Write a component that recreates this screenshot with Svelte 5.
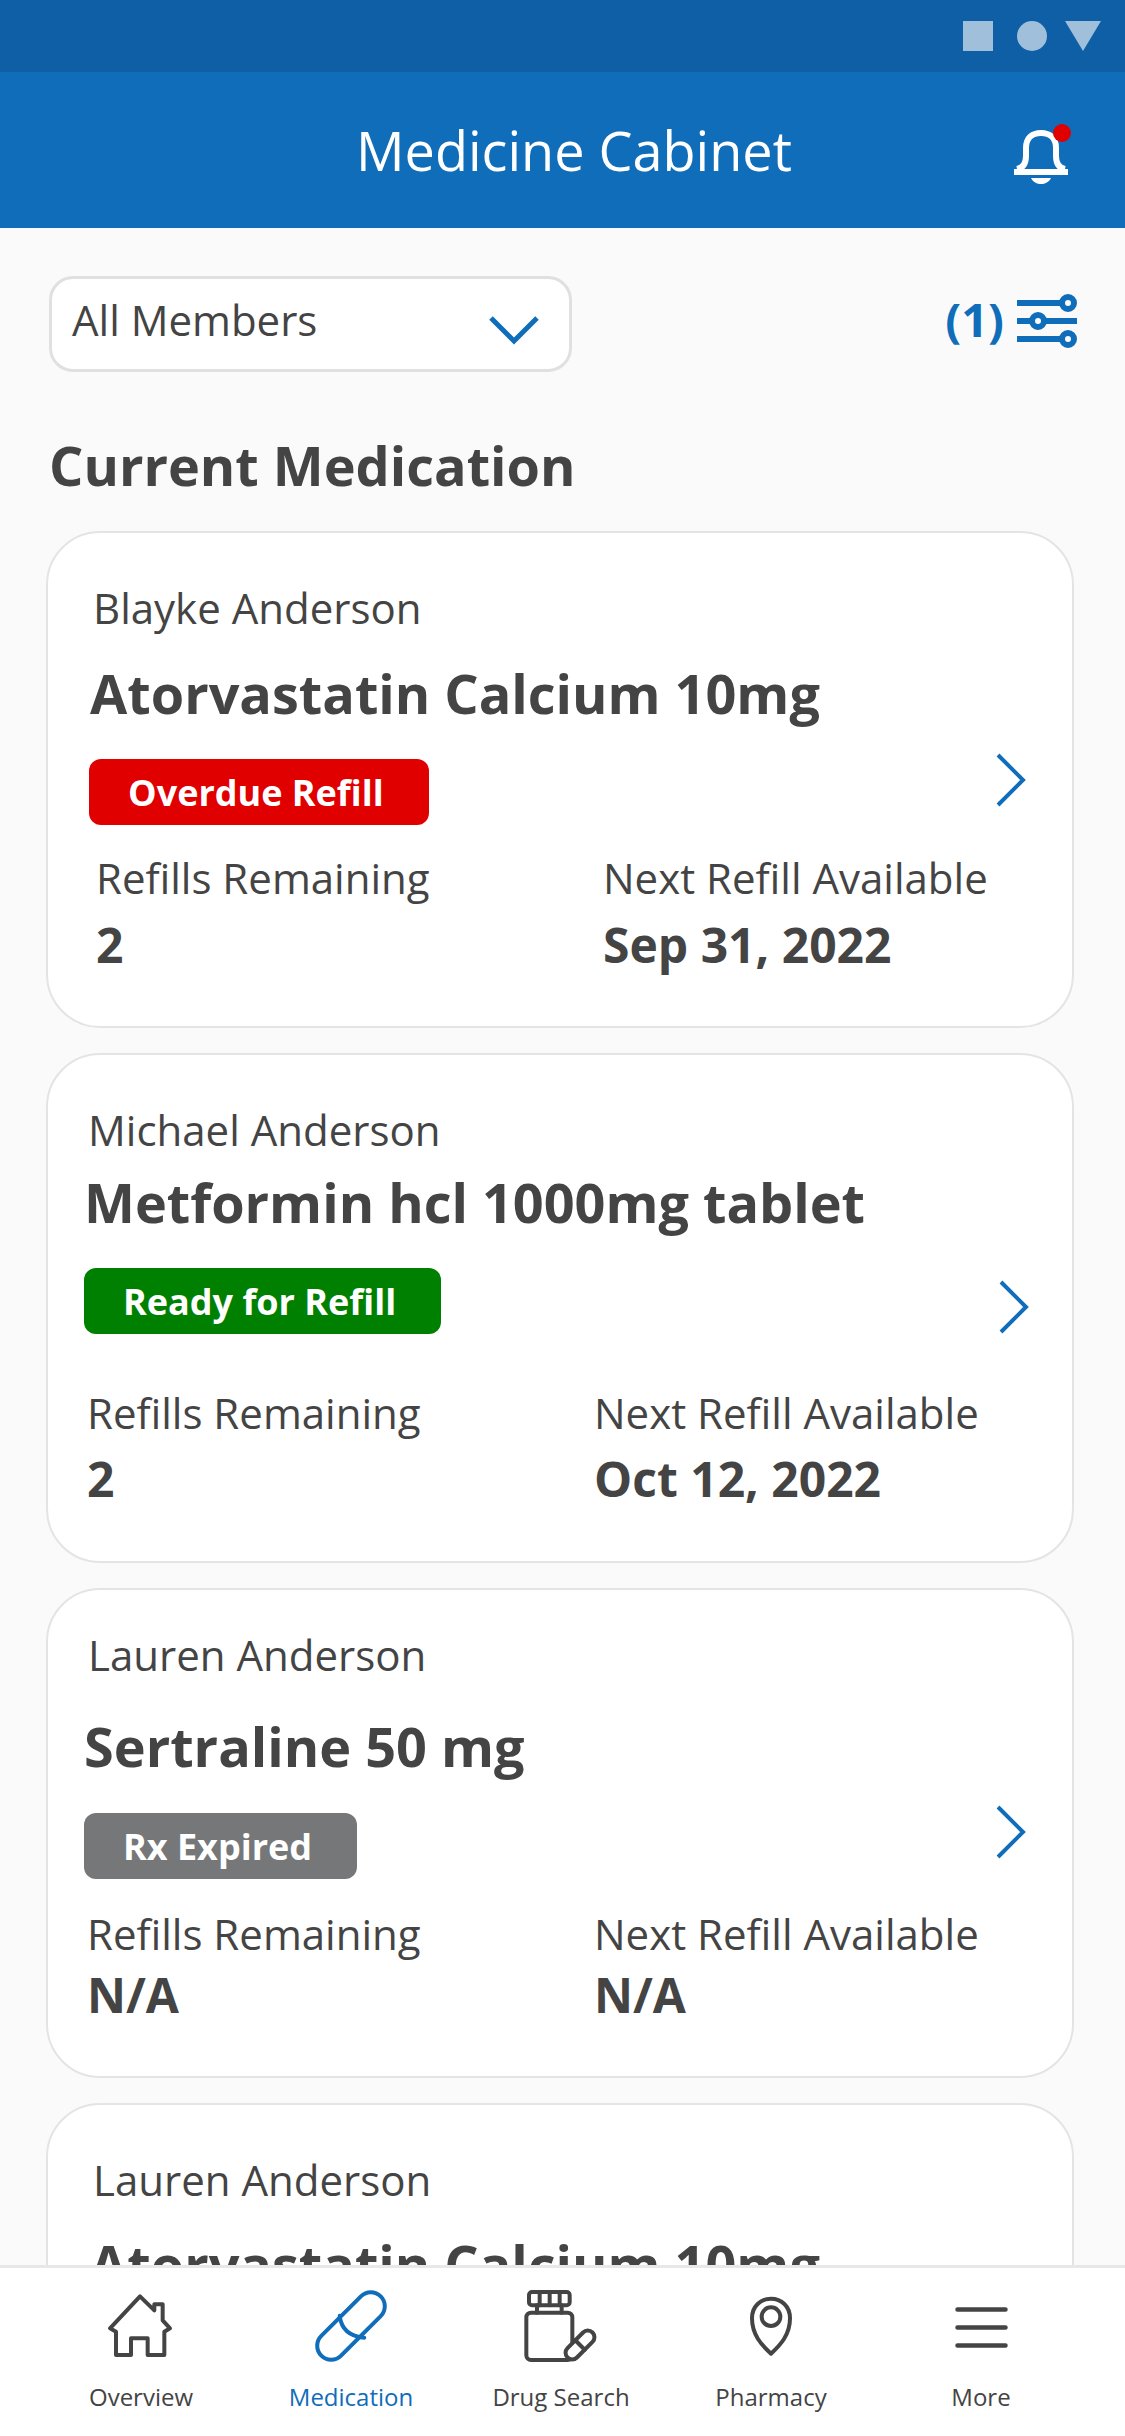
<script>
  const meds = [
    { cls: 'c1', name: 'Blayke Anderson', drug: 'Atorvastatin Calcium 10mg', badge: 'Overdue Refill', tone: 'red', refills: '2', next: 'Sep 31, 2022' },
    { cls: 'c2', name: 'Michael Anderson', drug: 'Metformin hcl 1000mg tablet', badge: 'Ready for Refill', tone: 'green', refills: '2', next: 'Oct 12, 2022' },
    { cls: 'c3', name: 'Lauren Anderson', drug: 'Sertraline 50 mg', badge: 'Rx Expired', tone: 'gray', refills: 'N/A', next: 'N/A' },
    // last card runs under the tab bar, only its top shows
    { cls: 'c4', name: 'Lauren Anderson', drug: 'Atorvastatin Calcium 10mg' }
  ];
</script>

<div class="screen">
  <div class="status">
    <svg width="138" height="30" viewBox="0 0 138 30">
      <rect x="0" y="0" width="30" height="30" />
      <circle cx="69" cy="15" r="15" />
      <path d="M102 0 H138 L120 30 Z" />
    </svg>
  </div>

  <header class="header">
    <h1>Medicine Cabinet</h1>
    <svg class="bell" width="60" height="62" viewBox="0 0 60 62">
      <path class="bell-line" d="M5 45 C10 44 14 40 14 32 V24 C14 14 20 9 29 9 C38 9 44 14 44 24 V32 C44 40 48 44 53 45" />
      <path class="bell-line" d="M2 48 H56" />
      <path class="bell-fill" d="M19 54 H39 C37 58 33 60 29 60 C25 60 21 58 19 54 Z" />
      <circle class="bell-dot" cx="50" cy="9" r="9" />
    </svg>
  </header>

  <main class="content">
    <div class="toolbar">
      <div class="select">
        <span>All Members</span>
        <svg width="50" height="30" viewBox="0 0 50 30">
          <path d="M2 3 L25 26 L48 3" />
        </svg>
      </div>
      <div class="filter">
        <span>(1)</span>
        <svg width="70" height="66" viewBox="0 0 70 66">
          <path d="M5 15 H50 M5 33 H65 M5 51 H50" />
          <circle cx="56" cy="15" r="6" />
          <circle cx="26" cy="33" r="6" />
          <circle cx="56" cy="51" r="6" />
        </svg>
      </div>
    </div>

    <h2>Current Medication</h2>

    {#each meds as med}
      <section class="card {med.cls}">
        <div class="name">{med.name}</div>
        <div class="drug">{med.drug}</div>
        {#if med.badge}
          <div class="status-row">
            <span class="badge {med.tone}">{med.badge}</span>
            <svg class="chevron" width="32" height="54" viewBox="0 0 32 54">
              <path d="M3 2 L28 27 L3 52" />
            </svg>
          </div>
          <div class="facts">
            <div>
              <div class="label">Refills Remaining</div>
              <div class="value">{med.refills}</div>
            </div>
            <div>
              <div class="label">Next Refill Available</div>
              <div class="value">{med.next}</div>
            </div>
          </div>
        {/if}
      </section>
    {/each}
  </main>

  <nav class="tabs">
    <div class="tab">
      <div class="tab-icon">
        <svg width="70" height="70" viewBox="80 30 210 210">
          <path d="M182 46 L225 88 V70 H250 V118 L272 142 L255 152 V222 H205 V172 H155 V222 H110 V152 L92 142 Z" />
        </svg>
      </div>
      <span>Overview</span>
    </div>
    <div class="tab active">
      <div class="tab-icon">
        <svg width="76" height="76" viewBox="698 29 228 228">
          <rect x="686" y="101" width="252" height="84" rx="42" transform="rotate(-45 812 143)" />
          <path d="M778 112 Q785 172 852 178" />
        </svg>
      </div>
      <span>Medication</span>
    </div>
    <div class="tab">
      <div class="tab-icon">
        <svg width="76" height="76" viewBox="100 30 228 228">
          <rect x="118" y="42" width="122" height="40" rx="9" />
          <path d="M150 42 V82 M180 42 V82 M210 42 V82 M142 82 V104 M216 82 V104" />
          <rect x="110" y="104" width="138" height="142" rx="14" />
          <g transform="rotate(-45 271 201)">
            <rect class="pill" x="218" y="181" width="106" height="40" rx="20" />
            <path d="M271 181 V221" />
          </g>
        </svg>
      </div>
      <span>Drug Search</span>
    </div>
    <div class="tab">
      <div class="tab-icon">
        <svg width="46" height="62" viewBox="774 50 138 186">
          <path d="M843 226 C815 200 786 170 786 120 C786 84 812 61 843 61 C874 61 900 84 900 120 C900 170 871 200 843 226 Z" />
          <circle cx="843" cy="115" r="28" />
        </svg>
      </div>
      <span>Pharmacy</span>
    </div>
    <div class="tab">
      <div class="tab-icon menu">
        <svg width="53" height="46" viewBox="0 0 53 46">
          <path d="M2.5 4.5 H50.5 M2.5 22.5 H50.5 M2.5 40.5 H50.5" />
        </svg>
      </div>
      <span>More</span>
    </div>
  </nav>
</div>

<style>
  :global(body) {
    margin: 0;
    background: #fafafa;
  }

  .screen {
    height: 2436px;
    display: flex;
    flex-direction: column;
    overflow: hidden;
    font-family: "Open Sans", "Noto Sans", sans-serif;
    color: #444;
    background: #fafafa;
  }

  .status {
    height: 72px;
    flex: none;
    background: #0f5fa6;
    display: flex;
    justify-content: flex-end;
    box-sizing: border-box;
    padding: 21px 24px 0 0;
  }
  .status svg {
    fill: #9fbfdb;
  }

  .header {
    height: 156px;
    flex: none;
    background: #106db9;
    display: flex;
    justify-content: space-between;
    align-items: center;
    box-sizing: border-box;
    padding: 0 53px 0 356px;
  }
  .header h1 {
    margin: 0;
    font-size: 54px;
    font-weight: 400;
    line-height: 70px;
    color: #fff;
  }
  .bell {
    margin-top: 10px;
  }
  .bell-line {
    fill: none;
    stroke: #fff;
    stroke-width: 6;
  }
  .bell-fill {
    fill: #fff;
  }
  .bell-dot {
    fill: #e10000;
  }

  .content {
    flex: 1;
    min-height: 0;
    overflow: hidden;
  }

  .toolbar {
    display: flex;
    justify-content: space-between;
    align-items: center;
    padding: 48px 43px 0 49px;
  }
  .select {
    width: 523px;
    height: 96px;
    box-sizing: border-box;
    border: 3px solid #e0e0e0;
    border-radius: 24px;
    background: #fff;
    display: flex;
    justify-content: space-between;
    align-items: center;
    padding: 0 30px 0 20px;
    font-size: 42px;
    line-height: 60px;
  }
  .select span {
    margin-bottom: 8px;
  }
  .select svg {
    margin-top: 12px;
  }
  .select path {
    fill: none;
    stroke: #106db9;
    stroke-width: 5;
  }
  .filter {
    display: flex;
    align-items: center;
    gap: 8px;
    margin-bottom: 6px;
    color: #106db9;
    font-size: 47px;
    font-weight: 700;
    line-height: 60px;
  }
  .filter span {
    margin-bottom: 4px;
  }
  .filter path {
    fill: none;
    stroke: #106db9;
    stroke-width: 6;
  }
  .filter circle {
    fill: #fafafa;
    stroke: #106db9;
    stroke-width: 6;
  }

  h2 {
    margin: 58px 0 31px 49px;
    font-size: 54px;
    font-weight: 700;
    line-height: 70px;
  }

  .card {
    margin: 0 51px 25px 46px;
    box-sizing: border-box;
    border: 2px solid #e4e4e4;
    border-radius: 54px;
    background: #fff;
    padding: var(--pad-top) 0 var(--pad-bottom) var(--pad-left);
  }
  .c1 {
    --pad-top: 45px; --pad-bottom: 51px; --pad-left: 41px;
    --name-x: 4px; --drug-x: 1px; --fact-x: 7px;
    --drug-top: 20px; --badge-top: 31px; --badge-h: 66px;
    --chev-top: -6px; --chev-x: 0px; --label-top: 23px; --value-top: 7px;
  }
  .c2 {
    --pad-top: 45px; --pad-bottom: 52px; --pad-left: 36px;
    --name-x: 4px; --drug-x: 0px; --fact-x: 3px;
    --drug-top: 7px; --badge-top: 31px; --badge-h: 66px;
    --chev-top: 12px; --chev-x: -3px; --label-top: 49px; --value-top: 6px;
  }
  .c3 {
    --pad-top: 35px; --pad-bottom: 51px; --pad-left: 36px;
    --name-x: 4px; --drug-x: 0px; --fact-x: 3px;
    --drug-top: 26px; --badge-top: 32px; --badge-h: 66px;
    --chev-top: -8px; --chev-x: 0px; --label-top: 25px; --value-top: 1px;
  }
  .c4 {
    --pad-top: 45px; --pad-bottom: 80px; --pad-left: 41px;
    --name-x: 4px; --drug-x: 1px;
    --drug-top: 19px;
  }

  .name {
    margin-left: var(--name-x);
    font-size: 42px;
    line-height: 60px;
  }
  .drug {
    margin: var(--drug-top) 0 0 var(--drug-x);
    font-size: 54px;
    font-weight: 700;
    line-height: 70px;
  }

  .status-row {
    display: flex;
    justify-content: space-between;
    align-items: flex-start;
    margin-top: var(--badge-top);
    padding-right: 45px;
  }
  .badge {
    height: var(--badge-h);
    display: inline-flex;
    align-items: center;
    padding: 0 45px 0 39px;
    border-radius: 12px;
    color: #fff;
    font-size: 36px;
    font-weight: 700;
  }
  .red { background: #e10000; }
  .green { background: #008000; }
  .gray { background: #767779; }
  .chevron {
    margin: var(--chev-top) var(--chev-x) 0 0;
  }
  .chevron path {
    fill: none;
    stroke: #106db9;
    stroke-width: 4;
  }

  .facts {
    display: grid;
    grid-template-columns: 507px 1fr;
    margin: var(--label-top) 0 0 var(--fact-x);
  }
  .label {
    font-size: 42px;
    line-height: 60px;
  }
  .value {
    margin-top: var(--value-top);
    font-size: 48px;
    font-weight: 700;
    line-height: 60px;
  }

  .tabs {
    flex: none;
    height: 171px;
    box-sizing: border-box;
    border-top: 3px solid #e8e8e8;
    background: #fff;
    display: grid;
    grid-template-columns: repeat(5, 210px);
    padding: 20px 0 0 36px;
  }
  .tab {
    display: flex;
    flex-direction: column;
    align-items: center;
    font-size: 24px;
    line-height: 34px;
  }
  .tab-icon {
    height: 76px;
    display: flex;
    align-items: center;
    margin-bottom: 16px;
  }
  .tab-icon.menu svg {
    margin-top: 3px;
    stroke-width: 4.5;
  }
  .tab svg {
    fill: none;
    stroke: #444;
    stroke-width: 12;
    stroke-linejoin: round;
    stroke-linecap: round;
  }
  .tab .pill {
    fill: #fff;
  }
  .tab.active {
    color: #106db9;
  }
  .tab.active svg {
    stroke: #106db9;
  }
</style>
